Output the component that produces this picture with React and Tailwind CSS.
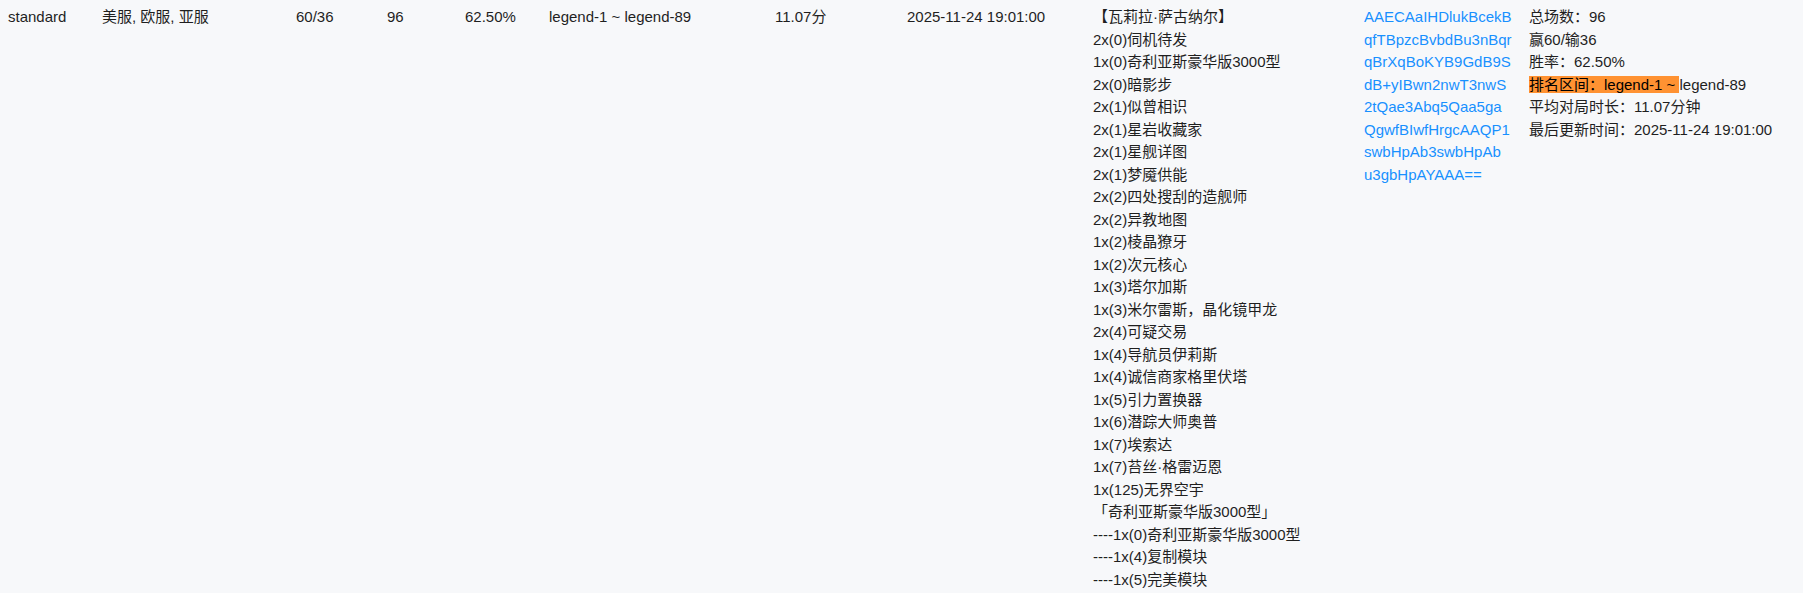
import React from "react";

const deck = [
  "【瓦莉拉·萨古纳尔】",
  "2x(0)伺机待发",
  "1x(0)奇利亚斯豪华版3000型",
  "2x(0)暗影步",
  "2x(1)似曾相识",
  "2x(1)星岩收藏家",
  "2x(1)星舰详图",
  "2x(1)梦魇供能",
  "2x(2)四处搜刮的造舰师",
  "2x(2)异教地图",
  "1x(2)棱晶獠牙",
  "1x(2)次元核心",
  "1x(3)塔尔加斯",
  "1x(3)米尔雷斯，晶化镜甲龙",
  "2x(4)可疑交易",
  "1x(4)导航员伊莉斯",
  "1x(4)诚信商家格里伏塔",
  "1x(5)引力置换器",
  "1x(6)潜踪大师奥普",
  "1x(7)埃索达",
  "1x(7)苔丝·格雷迈恩",
  "1x(125)无界空宇",
  "「奇利亚斯豪华版3000型」",
  "----1x(0)奇利亚斯豪华版3000型",
  "----1x(4)复制模块",
  "----1x(5)完美模块",
];

const code = [
  "AAECAaIHDlukBcekB",
  "qfTBpzcBvbdBu3nBqr",
  "qBrXqBoKYB9GdB9S",
  "dB+yIBwn2nwT3nwS",
  "2tQae3Abq5Qaa5ga",
  "QgwfBIwfHrgcAAQP1",
  "swbHpAb3swbHpAb",
  "u3gbHpAYAAA==",
];

export default function App() {
  return (
    <div
      className="min-h-[593px] w-full bg-[#f7f8fa] text-[15px] leading-[22.5px] text-[#1f1f1f]"
      style={{ fontFamily: '"Liberation Sans", "Noto Sans CJK SC", sans-serif' }}
    >
      <div className="flex items-start">
        <div className="w-[94px] shrink-0 px-2 pt-[6px]">standard</div>
        <div className="w-[194px] shrink-0 px-2 pt-[6px]">美服, 欧服, 亚服</div>
        <div className="w-[91px] shrink-0 px-2 pt-[6px]">60/36</div>
        <div className="w-[78px] shrink-0 px-2 pt-[6px]">96</div>
        <div className="w-[84px] shrink-0 px-2 pt-[6px]">62.50%</div>
        <div className="w-[226px] shrink-0 px-2 pt-[6px]">legend-1 ~ legend-89</div>
        <div className="w-[132px] shrink-0 px-2 pt-[6px]">11.07分</div>
        <div className="w-[186px] shrink-0 px-2 pt-[6px]">2025-11-24 19:01:00</div>
        <div className="w-[271px] shrink-0 px-2 pt-[6px]">
          {deck.map((l, i) => (
            <div key={i} className="whitespace-nowrap">{l}</div>
          ))}
        </div>
        <div className="w-[165px] shrink-0 px-2 pt-[6px] text-[#1890ff]">
          {code.map((l, i) => (
            <div key={i} className="whitespace-nowrap">{l}</div>
          ))}
        </div>
        <div className="flex-1 px-2 pt-[6px]">
          <div>总场数：96</div>
          <div>赢60/输36</div>
          <div>胜率：62.50%</div>
          <div className="whitespace-nowrap">
            <span className="bg-[#ff9232] text-black">排名区间：legend-1 ~ </span>legend-89
          </div>
          <div>平均对局时长：11.07分钟</div>
          <div>最后更新时间：2025-11-24 19:01:00</div>
        </div>
      </div>
    </div>
  );
}
